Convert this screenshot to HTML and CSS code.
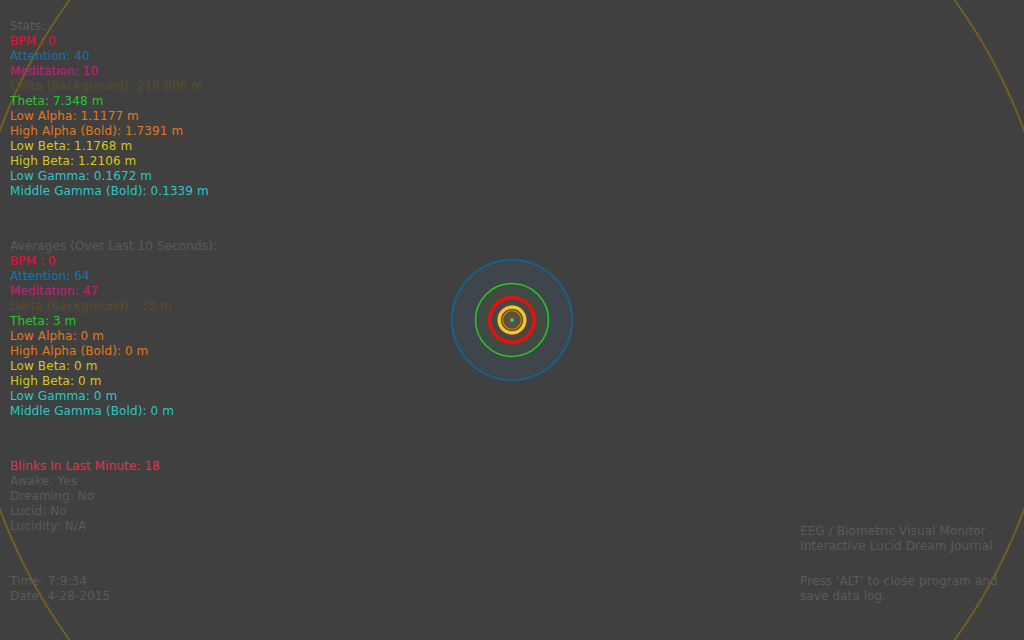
FILE: index.html
```html
<!DOCTYPE html>
<html>
<head>
<meta charset="utf-8">
<link rel="stylesheet" href="styles.css">
</head>
<body>
<div class="screen">
  <svg class="canvas" width="1024" height="640" viewBox="0 0 1024 640">
    <circle cx="512" cy="320" r="546" fill="none" stroke="#735e1e" stroke-width="2"/>
    <circle cx="512" cy="320" r="60" fill="#3f464b" stroke="#0a6c9e" stroke-width="1.5"/>
    <circle cx="512" cy="320" r="36.5" fill="#3f4a43" stroke="#28c828" stroke-width="1.5"/>
    <circle cx="512" cy="320" r="22.2" fill="#3f4a43" stroke="#dc1414" stroke-width="4"/>
    <circle cx="512" cy="320" r="14.5" fill="#5a5434" stroke="#b4287a" stroke-width="1.5"/>
    <circle cx="512" cy="320" r="12.8" fill="none" stroke="#e6d21e" stroke-width="3.2"/>
    <circle cx="512" cy="320" r="9.3" fill="none" stroke="#e07a1e" stroke-width="1.1"/>
    <circle cx="512" cy="320" r="1.8" fill="#2ad2d2"/>
  </svg>
  <div class="layout">
    <div class="left">
      <div class="block">
        <div class="gray">Stats:</div>
        <div class="bpm">BPM : 0</div>
        <div class="att">Attention: 40</div>
        <div class="med">Meditation: 10</div>
        <div class="delta">Delta (Background): 218.806 m</div>
        <div class="theta">Theta: 7.348 m</div>
        <div class="alpha">Low Alpha: 1.1177 m</div>
        <div class="alpha">High Alpha (Bold): 1.7391 m</div>
        <div class="beta">Low Beta: 1.1768 m</div>
        <div class="beta">High Beta: 1.2106 m</div>
        <div class="gamma">Low Gamma: 0.1672 m</div>
        <div class="gamma">Middle Gamma (Bold): 0.1339 m</div>
      </div>
      <div class="block">
        <div class="gray">Averages (Over Last 10 Seconds):</div>
        <div class="bpm">BPM : 0</div>
        <div class="att">Attention: 64</div>
        <div class="med">Meditation: 47</div>
        <div class="delta">Delta (Background):  33 m</div>
        <div class="theta">Theta: 3 m</div>
        <div class="alpha">Low Alpha: 0 m</div>
        <div class="alpha">High Alpha (Bold): 0 m</div>
        <div class="beta">Low Beta: 0 m</div>
        <div class="beta">High Beta: 0 m</div>
        <div class="gamma">Low Gamma: 0 m</div>
        <div class="gamma">Middle Gamma (Bold): 0 m</div>
      </div>
      <div class="block">
        <div class="blink">Blinks In Last Minute: 18</div>
        <div class="gray">Awake: Yes</div>
        <div class="gray">Dreaming: No</div>
        <div class="gray">Lucid: No</div>
        <div class="gray">Lucidity: N/A</div>
      </div>
      <div class="block">
        <div class="gray">Time: 7:9:34</div>
        <div class="gray">Date: 4-28-2015</div>
      </div>
    </div>
    <div class="right">
      <div class="block small-gap">
        <div class="gray">EEG / Biometric Visual Monitor</div>
        <div class="gray">Interactive Lucid Dream Journal</div>
      </div>
      <div class="block">
        <div class="gray">Press 'ALT' to close program and</div>
        <div class="gray">save data log.</div>
      </div>
    </div>
  </div>
</div>
</body>
</html>
```

FILE: styles.css
```css
html, body {
  margin: 0;
  padding: 0;
  background: #404040;
}
.screen {
  position: relative;
  width: 1024px;
  height: 640px;
  overflow: hidden;
  background: #404040;
  font-family: "DejaVu Sans", Verdana, sans-serif;
  font-size: 12px;
  line-height: 15px;
  letter-spacing: 0.1px;
}
.canvas {
  position: absolute;
  left: 0;
  top: 0;
}
.layout {
  position: relative;
  display: flex;
  justify-content: space-between;
  align-items: flex-end;
  padding: 19px 0 0 10px;
  width: 1024px;
  box-sizing: border-box;
}
.left {
  display: flex;
  flex-direction: column;
  gap: 40px;
}
.right {
  display: flex;
  flex-direction: column;
  gap: 20px;
  width: 224px;
}
.block div {
  white-space: pre;
}
.gray { color: #5b5b5b; }
.bpm { color: #e0143c; }
.att { color: #0a78b4; }
.med { color: #c81e78; }
.delta { color: #5e4d22; }
.theta { color: #28c828; }
.alpha { color: #e0781e; }
.beta { color: #d2c81e; }
.gamma { color: #28c8c8; }
.blink { color: #e0344c; }
```
